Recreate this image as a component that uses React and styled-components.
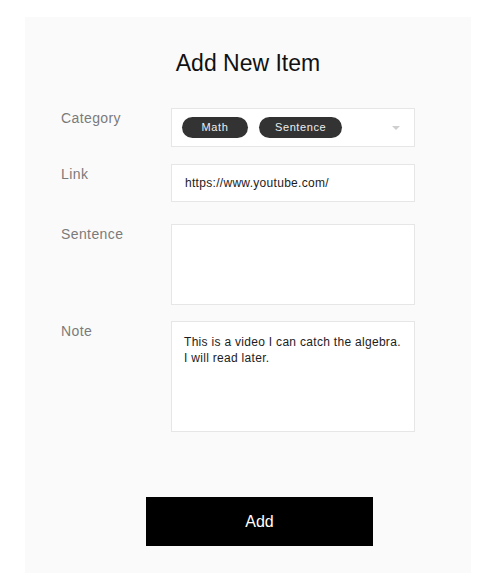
import React from 'react';
import styled, { createGlobalStyle } from 'styled-components';

const GlobalStyle = createGlobalStyle`
  body {
    margin: 0;
    background: #ffffff;
    font-family: "Liberation Sans", Arial, sans-serif;
  }
`;

const Page = styled.div`
  padding: 17px 0 0 25px;
`;

const Panel = styled.section`
  background-color: #fafafa;
  box-sizing: border-box;
  display: flex;
  flex-direction: column;
  height: 556px;
  padding: 32px 56px 27px 36px;
  width: 446px;
`;

const Title = styled.h2`
  color: #111;
  font-size: 23px;
  font-weight: 400;
  line-height: 28px;
  margin: 0 0 31px 0;
  padding-left: 20px;
  text-align: center;
`;

const Row = styled.div`
  display: grid;
  grid-template-columns: 110px 244px;
  margin-top: ${props => props.spacing || 0}px;
`;

const Label = styled.label`
  color: #7a7a7a;
  font-size: 14px;
  letter-spacing: 0.4px;
  line-height: 20px;
`;

const Field = styled.div`
  background-color: #fff;
  border: 1px solid #e6e6e6;
  box-sizing: border-box;
  color: #1c1c1c;
  font-size: 12px;
  height: ${props => props.height}px;
  letter-spacing: 0.3px;
  line-height: 16px;
  padding: 12px 12px;
`;

const LinkField = styled(Field)`
  align-items: center;
  display: flex;
  padding: 0 13px;
`;

const Select = styled(Field)`
  align-items: center;
  display: flex;
  gap: 11px;
  padding: 0 14px 0 10px;
`;

const Chip = styled.span`
  background-color: #333;
  border-radius: 11px;
  box-sizing: border-box;
  color: #eee;
  font-size: 11px;
  height: 21px;
  letter-spacing: 0.6px;
  line-height: 21px;
  min-width: 66px;
  padding: 0 16px;
  text-align: center;
`;

const Caret = styled.span`
  border-left: 4px solid transparent;
  border-right: 4px solid transparent;
  border-top: 4px solid #cfcfcf;
  height: 0;
  margin-left: auto;
  width: 0;
`;

const Footer = styled.div`
  display: flex;
  margin-top: auto;
  padding-left: 85px;
`;

const AddButton = styled.button`
  background-color: #000;
  border: none;
  color: #fff;
  cursor: pointer;
  font-family: inherit;
  font-size: 16px;
  height: 49px;
  width: 227px;
`;

const App = () => (
  <Page>
    <GlobalStyle />
    <Panel>
      <Title>Add New Item</Title>
      <Row>
        <Label>Category</Label>
        <Select height={39}>
          <Chip>Math</Chip>
          <Chip>Sentence</Chip>
          <Caret />
        </Select>
      </Row>
      <Row spacing={17}>
        <Label>Link</Label>
        <LinkField height={38}>https://www.youtube.com/</LinkField>
      </Row>
      <Row spacing={22}>
        <Label>Sentence</Label>
        <Field height={81} />
      </Row>
      <Row spacing={16}>
        <Label>Note</Label>
        <Field height={111}>
          This is a video I can catch the algebra.
          <br />
          I will read later.
        </Field>
      </Row>
      <Footer>
        <AddButton>Add</AddButton>
      </Footer>
    </Panel>
  </Page>
);

export default App;
